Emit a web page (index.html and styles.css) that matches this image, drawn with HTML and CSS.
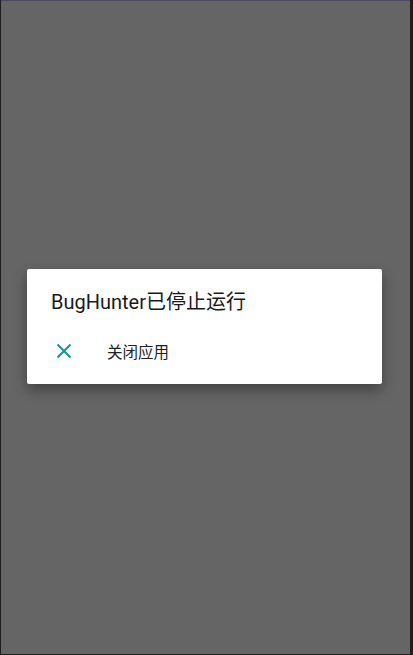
FILE: index.html
```html
<!DOCTYPE html>
<html lang="zh">
<head>
<meta charset="utf-8">
<link rel="stylesheet" href="styles.css">
</head>
<body>
<div class="screen">
  <div class="dialog">
    <div class="title">BugHunter已停止运行</div>
    <div class="action">
      <svg class="icon" width="16" height="16" viewBox="0 0 16 16"><path d="M1.5 1.5 L14.5 14.5 M14.5 1.5 L1.5 14.5" stroke="#14968a" stroke-width="2" fill="none"/></svg>
      <span class="label">关闭应用</span>
    </div>
  </div>
</div>
</body>
</html>
```
FILE: styles.css
```css
html, body {
  margin: 0;
  padding: 0;
  background: #1e1e1e;
}
.screen {
  box-sizing: border-box;
  width: 409px;
  height: 654px;
  margin-left: 1px;
  border-top: 1px solid #4c4860;
  background: #656565;
  padding-top: 268px;
  padding-left: 26px;
}
.dialog {
  width: 355px;
  height: 115px;
  box-sizing: border-box;
  background: #ffffff;
  border-radius: 2px;
  box-shadow: 0 6px 14px rgba(0,0,0,0.35);
  padding: 21px 0 0 24px;
}
.title {
  font-family: Roboto, "Noto Sans CJK SC", sans-serif;
  font-size: 20px;
  line-height: 24px;
  color: #1a1a1a;
}
.action {
  display: flex;
  align-items: center;
  margin-top: 25px;
  height: 24px;
}
.icon {
  margin-left: 5px;
  flex: none;
}
.label {
  margin-left: 35px;
  font-family: Roboto, "Noto Sans CJK SC", sans-serif;
  font-size: 15.5px;
  color: #212121;
}
```
